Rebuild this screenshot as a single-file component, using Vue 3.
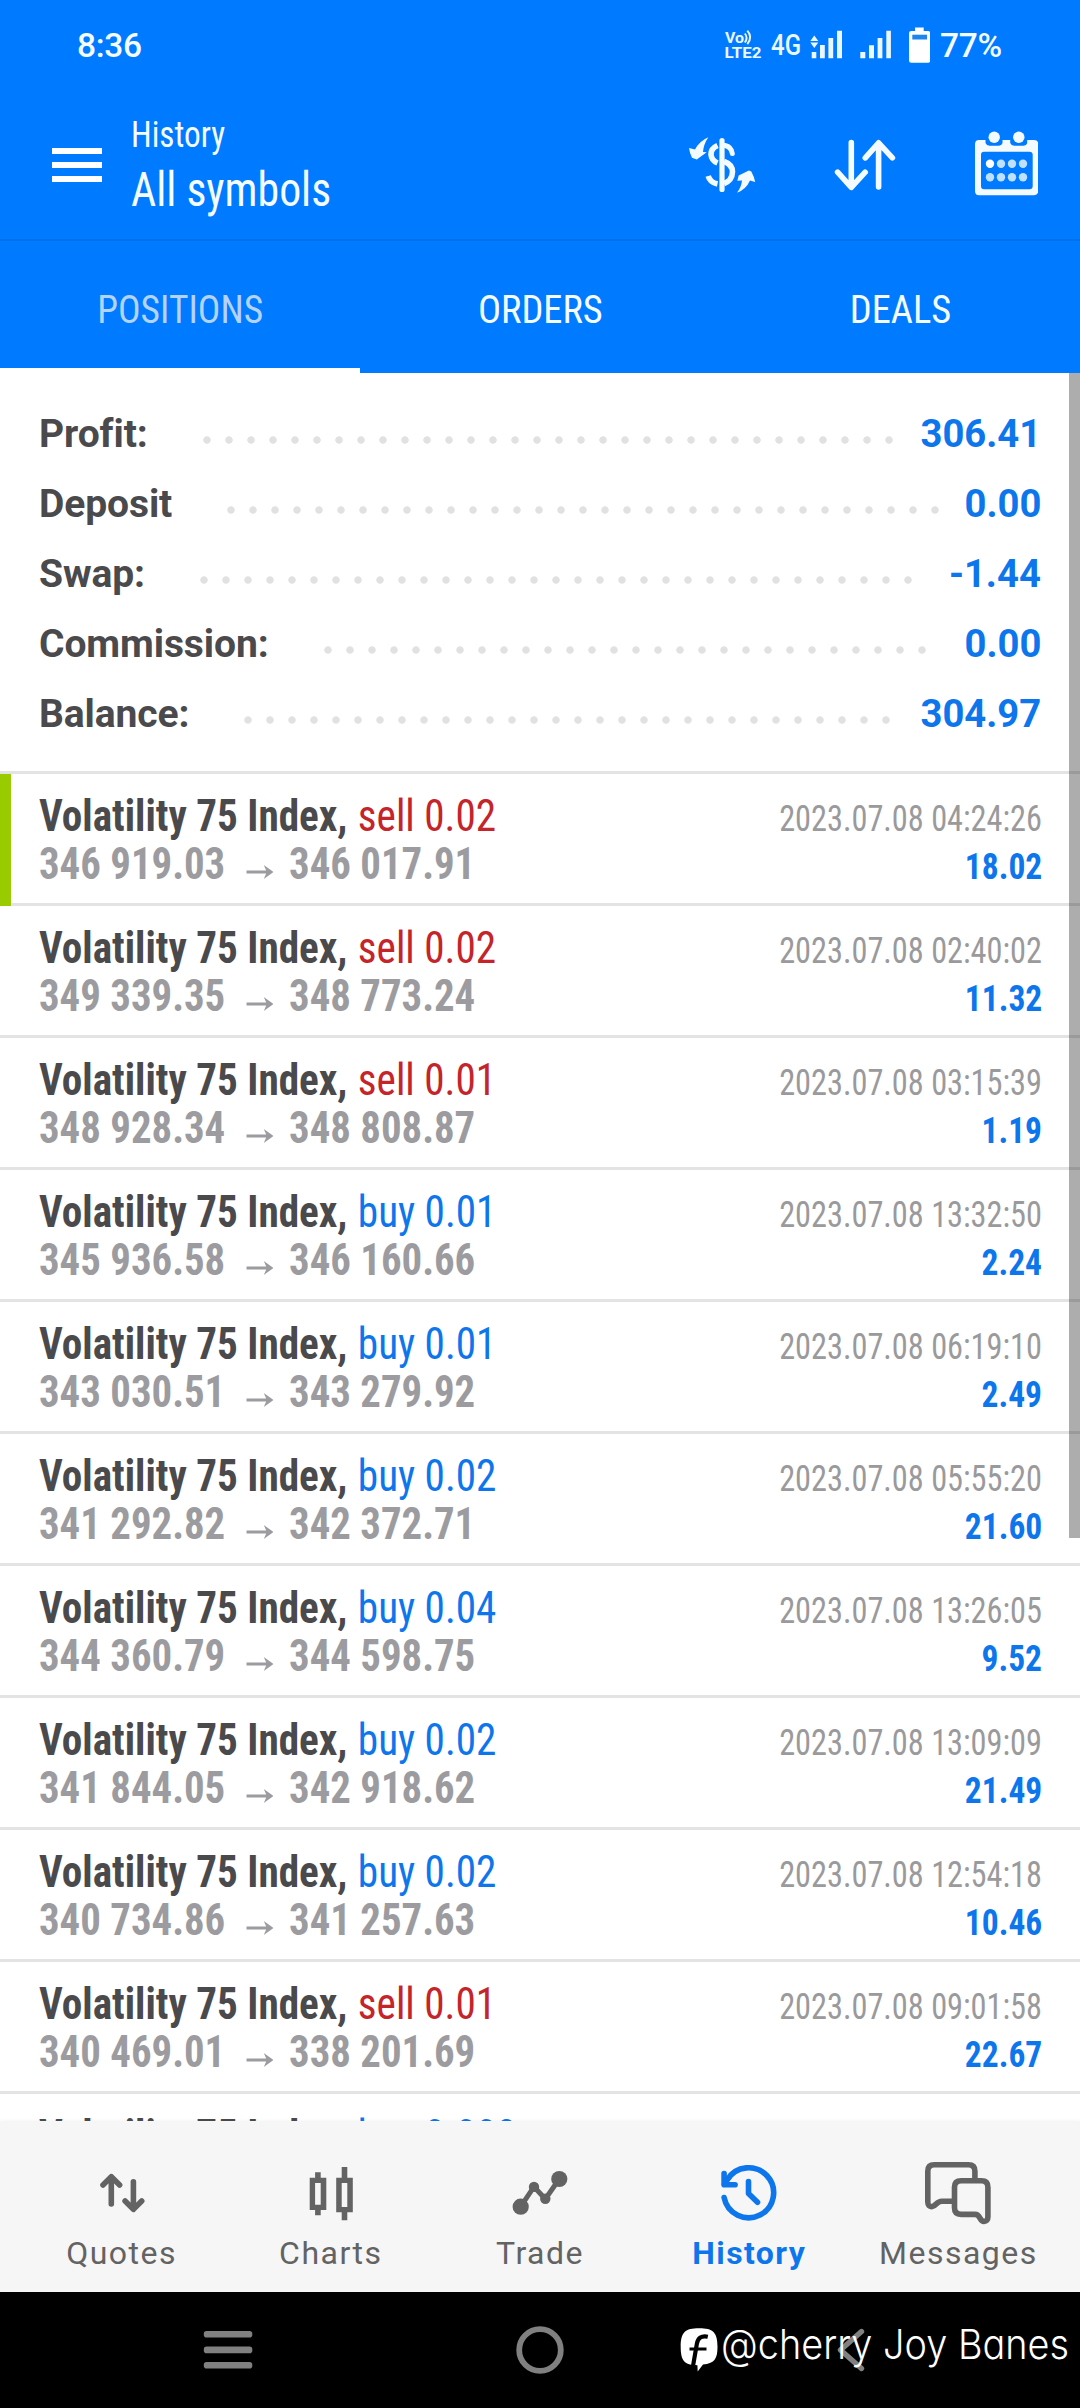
<script setup>
const tabs = ['POSITIONS', 'ORDERS', 'DEALS']

const summary = [
  { label: 'Profit:', value: '306.41', dots: 32 },
  { label: 'Deposit', value: '0.00', dots: 33 },
  { label: 'Swap:', value: '-1.44', dots: 33 },
  { label: 'Commission:', value: '0.00', dots: 28 },
  { label: 'Balance:', value: '304.97', dots: 30 },
]

const rows = [
  ['sell', '0.02', '346 919.03', '346 017.91', '2023.07.08 04:24:26', '18.02'],
  ['sell', '0.02', '349 339.35', '348 773.24', '2023.07.08 02:40:02', '11.32'],
  ['sell', '0.01', '348 928.34', '348 808.87', '2023.07.08 03:15:39', '1.19'],
  ['buy', '0.01', '345 936.58', '346 160.66', '2023.07.08 13:32:50', '2.24'],
  ['buy', '0.01', '343 030.51', '343 279.92', '2023.07.08 06:19:10', '2.49'],
  ['buy', '0.02', '341 292.82', '342 372.71', '2023.07.08 05:55:20', '21.60'],
  ['buy', '0.04', '344 360.79', '344 598.75', '2023.07.08 13:26:05', '9.52'],
  ['buy', '0.02', '341 844.05', '342 918.62', '2023.07.08 13:09:09', '21.49'],
  ['buy', '0.02', '340 734.86', '341 257.63', '2023.07.08 12:54:18', '10.46'],
  ['sell', '0.01', '340 469.01', '338 201.69', '2023.07.08 09:01:58', '22.67'],
  ['buy', '0.003', '', '', '', ''],
].map(([side, volume, open, close, time, profit]) => ({ side, volume, open, close, time, profit }))
</script>

<template>
  <div class="screen">
    <header class="top">
      <div class="status">
        <span class="clock">8:36</span>
        <svg class="status-icons" width="208" height="44" viewBox="722 22 208 44">
          <g fill="#eaf7ff">
            <text x="725" y="42" font-size="14.5" font-weight="700" textLength="19" lengthAdjust="spacingAndGlyphs">Vo</text>
            <text x="724.5" y="57.3" font-size="15.5" font-weight="700" textLength="37" lengthAdjust="spacingAndGlyphs">LTE2</text>
            <text x="771" y="54" font-size="29.5" font-weight="500" textLength="30" lengthAdjust="spacingAndGlyphs">4G</text>
            <path d="M814.3 34.5l4 5.5h-8zM814.3 47l4-5.5h-8z" />
            <path d="M811.7 51h4.6v6.3h-4.6zM820 44h4.8v13.3H820zM828.4 37h4.8v20.3h-4.8zM837 29.7h5v27.6h-5z" />
            <path d="M860.3 51h5v6.3h-5zM869 44.3h5v13h-5zM877.6 37h4.8v20.3h-4.8zM886.3 29.7h4.6v27.6h-4.6z" />
          </g>
          <path d="M744.8 32.5q3.600 4.200 0 9M747.300 29.700q5.800 6.600 0 13.500" fill="none" stroke="#eaf7ff" stroke-width="1.900" />
          <path d="M915 26.5h8.7v3.5h4.3q2.300 0 2.300 2.300v27.200q0 2.300-2.300 2.300h-16.700q-2.300 0-2.300-2.300V32.300q0-2.300 2.300-2.300h3.700z" fill="#fff" />
          <path d="M912.300 33.700h14.700v4.800h-14.700z" fill="#1c86ee" />
        </svg>
        <span class="percent">77%</span>
      </div>

      <div class="appbar">
        <svg class="menu" width="50" height="34" viewBox="0 0 50 34" fill="#fff">
          <path d="M0 0h50v6H0zM0 14h50v6H0zM0 28h50v6H0z" />
        </svg>
        <div class="titles cond">
          <div class="small">History</div>
          <div class="big">All symbols</div>
        </div>
        <svg class="actions" width="352" height="68" viewBox="686 130 352 68">
          <g fill="none" stroke="#f4fbff" stroke-linecap="round" stroke-linejoin="round">
            <path d="M722 140.500v49" stroke-width="5.200" />
            <path d="M717.500 145.500Q710.800 148.500 711 154.500 711.500 160.500 717.500 163" stroke-width="5.600" stroke-linecap="butt" />
            <path d="M725 145.500Q731.500 147 732.300 153.500" stroke-width="5" />
            <path d="M724 161.500Q732.500 164.500 732.500 172 732.200 180.500 724 183.500" stroke-width="5.600" stroke-linecap="butt" />
            <path d="M708.200 176Q710 182.500 717.500 184" stroke-width="5.600" stroke-linecap="butt" />
            <path d="M851.300 142.500v44M837.600 172.200l13.700 15.200 13.900-15.200" stroke-width="5.600" />
            <path d="M878.600 187V143M865.300 157.800l13.300-15 13.800 15" stroke-width="5.600" />
          </g>
          <g fill="#f4fbff">
            <path d="M708.300 137.300Q703.500 144.500 703 152l3.700.2-9.900 7.400-4.800-1.800q-2.400-5-3-9.800l6 1.600q4.500-8.600 13.300-12.300z" />
            <path d="M737 192.700q4.300-5.500 5-12.200l-4.700.2 1.400-5.200 10.200-5 2.400 1q3 5.500 3.900 10.500l-5.200-1.500Q746 189.500 737 192.700z" />
            <path fill-rule="evenodd" d="M979 140h55q4.300 0 4.300 4.300v46.500q0 4.500-4.300 4.500h-55q-4 0-4-4.500v-46.500q0-4.300 4-4.300zM984 151.700q-3 0-3 3V186q0 3.300 3 3.300h45.500q3.200 0 3.200-3.300v-31.300q0-3-3.200-3z" />
          </g>
          <path d="M985.500 137h17v6q-1 2.800-4 2.800h-9q-3-.3-4-2.800zM1010.200 137h17v6q-1 2.800-4 2.800h-9q-3-.3-4-2.800z" fill="#007aff" />
          <circle cx="994.200" cy="137.300" r="5.700" fill="#f4fbff" />
          <circle cx="1018.800" cy="137.300" r="5.700" fill="#f4fbff" />
          <g fill="#bfe0ff">
            <circle cx="990" cy="163.700" r="4.200" fill="#fff" />
            <circle cx="1001" cy="163.700" r="4.200" />
            <circle cx="1012" cy="163.700" r="4.200" />
            <circle cx="1023" cy="163.700" r="4.200" />
            <circle cx="990" cy="177.300" r="4.200" />
            <circle cx="1001" cy="177.300" r="4.200" />
            <circle cx="1012" cy="177.300" r="4.200" />
            <circle cx="1023" cy="177.300" r="4.200" />
          </g>
        </svg>
      </div>

      <nav class="tabs cond">
        <div v-for="(tab, i) in tabs" :key="tab" class="tab" :class="{ active: i === 0 }">
          <span>{{ tab }}</span>
        </div>
      </nav>
    </header>

    <main class="content">
      <section class="summary">
        <div v-for="item in summary" :key="item.label" class="sum-row">
          <span class="sum-label">{{ item.label }}</span>
          <span class="dots" :style="{ width: item.dots * 22 + 'px' }"></span>
          <span class="sum-value">{{ item.value }}</span>
        </div>
      </section>

      <section class="deals cond">
        <div v-for="(row, i) in rows" :key="i" class="deal" :class="{ marked: i === 0 }">
          <div class="line">
            <div class="name">
              <span class="symbol">Volatility 75 Index,</span>
              <span class="side" :class="row.side">{{ row.side }} {{ row.volume }}</span>
            </div>
            <span class="time">{{ row.time }}</span>
          </div>
          <div v-if="row.open" class="line">
            <div class="prices">
              <span>{{ row.open }}</span>
              <svg class="arrow" width="29" height="14" viewBox="0 0 28 14" preserveAspectRatio="none">
                <path d="M0 5.400h20.500L18 0l10 7-10 7 2.500-5.400H0z" fill="#9c9ca0" />
              </svg>
              <span>{{ row.close }}</span>
            </div>
            <span class="profit">{{ row.profit }}</span>
          </div>
        </div>
      </section>
      <div class="scrollbar"></div>
    </main>

    <nav class="bottom">
      <div class="item">
        <svg width="70" height="70" viewBox="86.600 2158 70 70" fill="none" stroke="#636363" stroke-width="5.600" stroke-linecap="round" stroke-linejoin="round">
          <path d="M110.900 2204v-27M102.600 2185l8.300-8.400 8.300 8.400M133 2181.800v27M124.700 2201l8.300 8.400 8.300-8.400" />
        </svg>
        <span>Quotes</span>
      </div>
      <div class="item">
        <svg width="70" height="70" viewBox="295.900 2158 70 70" fill="#636363">
          <path fill-rule="evenodd" d="M315 2172.300h5.600v5.400h5.600v32.300h-5.600v5.300H315V2210h-5.400v-32.300h5.400zM315 2183v21.800h5.600V2183z" />
          <path fill-rule="evenodd" d="M341.600 2167h5.600v10.700h5.500v34.600h-5.500v8h-5.600v-8h-5.500v-34.600h5.500zM341.600 2183v24h5.600v-24z" />
        </svg>
        <span>Charts</span>
      </div>
      <div class="item">
        <svg width="70" height="70" viewBox="505 2158 70 70" fill="#636363">
          <path d="M520.700 2206.700L534 2186.700 545.300 2199 559.300 2179" fill="none" stroke="#636363" stroke-width="5" />
          <circle cx="520.700" cy="2206.700" r="8.100" />
          <circle cx="534" cy="2186.900" r="5.200" />
          <circle cx="545.300" cy="2198.700" r="5.200" />
          <circle cx="559.300" cy="2179" r="8.100" />
        </svg>
        <span>Trade</span>
      </div>
      <div class="item current">
        <svg width="70" height="70" viewBox="714.200 2158 70 70" fill="none" stroke="#0d76ec" stroke-width="5.600" stroke-linecap="round" stroke-linejoin="round">
          <path d="M724.300 2197.500A25 25 0 1 0 727.500 2179.700L724.700 2184" />
          <path d="M724.300 2173.500v11.300h11" />
          <path d="M748.700 2181.500v12l9 8.800" />
        </svg>
        <span>History</span>
      </div>
      <div class="item">
        <svg width="70" height="70" viewBox="923.400 2158 70 70" fill="none" stroke="#636363" stroke-width="5.600" stroke-linejoin="round">
          <path d="M975.300 2179v-7.800q0-6.400-6.400-6.400h-34.300q-6.400 0-6.400 6.400v30.600q0 5.400 4.500 4.700c3.500-.600 4.600-5.300 9.500-5.300h11" />
          <path d="M961.500 2180.800h20.500q6.300 0 6.300 6.400v29.500q0 4.800-4 4.700c-4.600 0-3.300-7-8.800-7h-14q-6.600 0-6.600-6.600v-20.600q0-6.400 6.600-6.400z" />
        </svg>
        <span>Messages</span>
      </div>
    </nav>

    <footer class="system">
      <svg width="50" height="38" viewBox="0 0 50 38" fill="#808080">
        <rect x=".8" y="0" width="48.500" height="6.600" rx="2.800" />
        <rect x=".8" y="15.600" width="48.500" height="6.600" rx="2.800" />
        <rect x=".8" y="31" width="48.500" height="6.600" rx="2.800" />
      </svg>
      <svg width="50" height="50" viewBox="0 0 50 50">
        <circle cx="25" cy="25" r="20.800" fill="none" stroke="#808080" stroke-width="5.800" />
      </svg>
      <svg width="50" height="50" viewBox="0 0 50 50">
        <path d="M34.500 6.500L13.500 25l21 18.500" fill="none" stroke="#808080" stroke-width="5.400" stroke-linecap="round" stroke-linejoin="round" />
      </svg>
      <svg class="signature" width="400" height="60" viewBox="680 2320 400 60">
        <path d="M699 2328.300c14 0 18.500 4 18.500 18.500 0 12.500-3.300 16.800-14.500 17.700l-5.300 7-.3-6.300c-13 0-16.700-4.500-16.700-18.400 0-14.500 4.500-18.500 18.300-18.500z" fill="#fff" />
        <path d="M707.800 2336.700c-6.500-1.300-9.800 1.200-10.900 7l-3.800 21.800" fill="none" stroke="#000" stroke-width="4.200" />
        <path d="M689.500 2349h17" stroke="#000" stroke-width="3" />
        <text x="721" y="2359.300" textLength="348" lengthAdjust="spacingAndGlyphs">@cherry Joy Banes</text>
      </svg>
    </footer>
  </div>
</template>

<style>
body {
  margin: 0;
}
</style>

<style scoped>
.screen {
  width: 1080px;
  height: 2408px;
  display: flex;
  flex-direction: column;
  overflow: hidden;
  background: #fff;
  font-family: Roboto, "Liberation Sans", sans-serif;
  white-space: nowrap;
}
.cond {
  font-family: "Roboto Condensed", Roboto, sans-serif;
  font-stretch: 75%;
}
svg {
  display: block;
  flex: none;
}
.top {
  height: 373px;
  flex: none;
  display: flex;
  flex-direction: column;
  background: #007aff;
  color: #f4fcff;
}
.status {
  height: 88px;
  flex: none;
  display: flex;
  align-items: center;
  padding: 2px 0 0 77px;
  box-sizing: border-box;
  font-size: 33.5px;
  font-weight: 500;
  letter-spacing: -0.3px;
}
.status-icons {
  margin-left: auto;
  letter-spacing: 0;
}
.percent {
  width: 140px;
  margin-left: 10px;
}
.appbar {
  height: 153px;
  flex: none;
  display: flex;
  align-items: flex-start;
  box-sizing: border-box;
  border-bottom: 2px solid #0070e8;
  padding-left: 52px;
}
.menu {
  margin-top: 60px;
}
.titles {
  margin: 25px 0 0 29px;
}
.small {
  font-size: 36px;
  line-height: 44px;
  transform: scaleX(0.925);
  transform-origin: left;
}
.big {
  font-size: 48px;
  line-height: 66px;
  transform: scaleX(0.912);
  transform-origin: left;
}
.actions {
  margin: 42px 42px 0 auto;
}
.tabs {
  height: 132px;
  flex: none;
  display: flex;
  font-size: 39px;
}
.tab {
  flex: 1;
  height: 132px;
  text-align: center;
  line-height: 132px;
  padding-top: 3px;
  box-sizing: border-box;
}
.tab span {
  display: inline-block;
  transform: scaleX(0.985);
}
.tab.active {
  color: #b3d3f8;
  box-shadow: inset 0 -5px #fff;
}
.tab.active span {
  transform: scaleX(0.962);
}
.content {
  height: 1748px;
  flex: none;
  position: relative;
  overflow: hidden;
}
.summary {
  height: 401px;
  box-sizing: border-box;
  padding: 26px 39px 0;
  border-bottom: 3px solid #e3e3e3;
}
.sum-row {
  height: 70px;
  line-height: 70px;
  display: flex;
  font-size: 39px;
  font-weight: 700;
  color: #4a4a4d;
}
.sum-label {
  letter-spacing: -0.1px;
}
.dots {
  height: 8px;
  margin: 37px 0 0 55px;
  background: radial-gradient(circle at 4px 4px, #e1e1e1 3.300px, transparent 4.100px) 0 0 / 22px 8px;
}
.sum-value {
  margin-left: auto;
  color: #0d76ec;
  transform: scaleX(0.98);
  transform-origin: right;
}
.deal {
  height: 132px;
  box-sizing: border-box;
  padding: 19px 38px 0 39px;
  background: linear-gradient(#e3e3e3, #e3e3e3) 0 100% / 100% 3px no-repeat;
}
.deal.marked {
  background:
    linear-gradient(#99cc00, #99cc00) 0 0 / 11px 100% no-repeat,
    linear-gradient(#e3e3e3, #e3e3e3) 0 100% / 100% 3px no-repeat;
}
.line {
  height: 48px;
  line-height: 48px;
  display: flex;
  align-items: baseline;
  font-size: 43.5px;
}
.name,
.prices {
  display: flex;
  align-items: baseline;
  transform-origin: left;
}
.name {
  transform: scaleX(0.946);
}
.prices {
  transform: scaleX(0.938);
  font-weight: 700;
  color: #9c9ca0;
}
.symbol {
  font-weight: 700;
  color: #4a4a4d;
}
.side {
  margin-left: 11px;
}
.sell {
  color: #c4242a;
}
.buy {
  color: #0d76ec;
}
.arrow {
  margin: 0 17px 0 22px;
}
.time,
.profit {
  margin-left: auto;
  font-size: 36px;
  transform-origin: right;
}
.time {
  color: #9a9a9c;
  transform: scaleX(0.897);
}
.profit {
  font-weight: 700;
  color: #0d76ec;
  transform: scaleX(0.93);
}
.scrollbar {
  position: absolute;
  top: 0;
  right: 0;
  width: 11px;
  height: 1165px;
  background: rgba(0, 0, 0, 0.32);
}
.bottom {
  height: 171px;
  flex: none;
  display: flex;
  box-sizing: border-box;
  padding: 37px 17px 0;
  background: #f6f6f6;
  box-shadow: 0 0 4px rgba(0, 0, 0, 0.06);
  position: relative;
}
.item {
  flex: 1;
  display: flex;
  flex-direction: column;
  align-items: center;
  color: #636363;
  font-size: 32px;
  line-height: 44px;
  letter-spacing: 1.500px;
}
.item span {
  margin-top: 3px;
}
.item.current {
  color: #0d76ec;
  font-weight: 700;
  letter-spacing: 1.400px;
}
.system {
  flex: 1;
  position: relative;
  display: flex;
  align-items: center;
  justify-content: space-between;
  padding: 0 203px;
  background: #000;
}
.signature {
  position: absolute;
  left: 680px;
  top: 28px;
  font-family: Inter, sans-serif;
  font-size: 41px;
  font-weight: 300;
  font-feature-settings: "cv11";
  fill: #fff;
}
</style>
